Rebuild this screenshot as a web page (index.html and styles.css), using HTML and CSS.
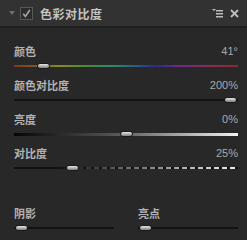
FILE: index.html
```html
<!DOCTYPE html>
<html>
<head>
<meta charset="utf-8">
<link rel="stylesheet" href="styles.css">
</head>
<body>
<div class="panel">
  <div class="header">
    <span class="disclosure"></span>
    <span class="check">
      <svg width="13" height="13" viewBox="0 0 13 13"><path d="M3.2 6.8 L5.4 9.4 L9.8 3" fill="none" stroke="#a8a8a8" stroke-width="1.6"/></svg>
    </span>
    <span class="title">色彩对比度</span>
    <span class="tools">
      <svg width="12" height="10" viewBox="0 0 12 10"><path d="M0 1 L4 1 L2 3 Z" fill="#bdbdbd"/><rect x="4" y="2" width="7" height="1.5" fill="#bdbdbd"/><rect x="4" y="5" width="7" height="1.5" fill="#bdbdbd"/><rect x="4" y="8" width="7" height="1.5" fill="#bdbdbd"/></svg>
      <svg width="9" height="9" viewBox="0 0 9 9"><path d="M1 1 L8 8 M8 1 L1 8" stroke="#bdbdbd" stroke-width="1.8"/></svg>
    </span>
  </div>
  <div class="body">
    <div class="row">
      <div class="line"><span class="label">颜色</span><span class="value">41°</span></div>
      <div class="slider"><div class="track hue"></div><div class="thumb" style="left:23px"></div></div>
    </div>
    <div class="row">
      <div class="line"><span class="label">颜色对比度</span><span class="value">200%</span></div>
      <div class="slider"><div class="track dark"></div><div class="thumb" style="left:210px"></div></div>
    </div>
    <div class="row">
      <div class="line"><span class="label">亮度</span><span class="value">0%</span></div>
      <div class="slider"><div class="track bright"></div><div class="thumb" style="left:106px"></div></div>
    </div>
    <div class="row">
      <div class="line"><span class="label">对比度</span><span class="value">25%</span></div>
      <div class="slider"><div class="track dashed"></div><div class="thumb" style="left:52px"></div></div>
    </div>
    <div class="pair">
      <div class="row half">
        <div class="line"><span class="label">阴影</span></div>
        <div class="slider"><div class="track dark"></div><div class="thumb" style="left:1px"></div></div>
      </div>
      <div class="row half">
        <div class="line"><span class="label">亮点</span></div>
        <div class="slider"><div class="track dark"></div><div class="thumb" style="left:1px"></div></div>
      </div>
    </div>
  </div>
</div>
</body>
</html>
```
FILE: styles.css
```css
html, body {
  margin: 0;
  padding: 0;
  background: #282828;
  width: 247px;
  height: 240px;
  overflow: hidden;
}
.panel {
  font-family: "Noto Sans CJK SC", "Liberation Sans", sans-serif;
  color: #b4b4b4;
}
.header {
  height: 26px;
  background: #323232;
  border-bottom: 2px solid #1e1e1e;
  display: flex;
  align-items: center;
  padding: 0 8px 0 9px;
  box-sizing: content-box;
}
.disclosure {
  width: 0;
  height: 0;
  border-left: 3.5px solid transparent;
  border-right: 3.5px solid transparent;
  border-top: 4px solid #6e6e6e;
  margin-right: 5px;
}
.check {
  width: 13px;
  height: 13px;
  box-sizing: border-box;
  border: 1px solid #585858;
  background: #2c2c2c;
  display: flex;
  margin-right: 7px;
}
.check svg { margin: -1px; }
.title {
  font-size: 12px;
  font-weight: bold;
  color: #c4c4c4;
  letter-spacing: 0.5px;
  flex: 1;
}
.tools {
  display: flex;
  align-items: center;
  gap: 6px;
}
.body {
  padding: 16px 9px 0 14px;
  display: flex;
  flex-direction: column;
  gap: 4px;
}
.row {
  display: flex;
  flex-direction: column;
}
.line {
  height: 14px;
  display: flex;
  justify-content: space-between;
  align-items: center;
  font-size: 11px;
  font-weight: bold;
}
.label { color: #b2b2b2; }
.value {
  font-family: "Liberation Sans", sans-serif;
  font-weight: normal;
  color: #a8a8a8;
}
.slider {
  position: relative;
  height: 16px;
  display: flex;
  align-items: center;
}
.track {
  height: 2px;
  width: 100%;
}
.hue {
  background: linear-gradient(90deg, #7a3a24, #8a5a20 12%, #8a8a20 20%, #4a8a30 32%, #2a8a70 45%, #2a5a8a 55%, #2a2a8a 63%, #6a2a8a 73%, #8a2a5a 87%, #8a2a2a);
}
.dark { background: #121212; }
.bright {
  height: 3px;
  background: linear-gradient(90deg, #050505, #555 45%, #f2f2f2);
}
.dashed {
  background:
    repeating-linear-gradient(90deg, transparent 0 5px, #111 5px 8px),
    linear-gradient(90deg, #111 0%, #111 20%, #777 55%, #f0f0f0);
}
.thumb {
  position: absolute;
  top: 5px;
  width: 13px;
  height: 6px;
  border-radius: 3px;
  box-sizing: border-box;
  border: 1px solid #1a1a1a;
  background: linear-gradient(#e8e8e8, #a8a8a8 60%, #808080);
}
.pair {
  display: flex;
  gap: 24px;
  margin-top: 26px;
}
.half { flex: 1; }
```
